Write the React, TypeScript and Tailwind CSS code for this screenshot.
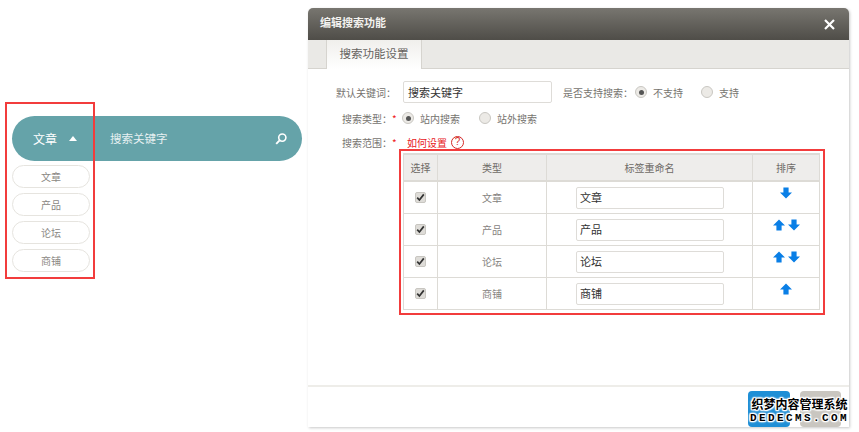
const font = '[font-family:"Noto_Sans_CJK_SC","Liberation_Sans",sans-serif]';

function Radio({ on, label, className = "" }: { on?: boolean; label: string; className?: string }) {
  return (
    <span className={`flex items-center gap-[6px] whitespace-nowrap ${className}`}>
      <span className="flex h-[12px] w-[12px] items-center justify-center rounded-full border border-[#c9c7c2] bg-[#eceae6]">
        {on && <span className="h-[5px] w-[5px] rounded-full bg-[#555]" />}
      </span>
      <span>{label}</span>
    </span>
  );
}

function Arrow({ up }: { up?: boolean }) {
  return (
    <svg width="12" height="12" viewBox="0 0 12 12" className={up ? "" : "rotate-180"}>
      <path d="M6 .5 12 6.5H8.6V11.5H3.4V6.5H0Z" fill="#0a7fe6" />
    </svg>
  );
}

function Check() {
  return (
    <span className="flex h-[11px] w-[11px] items-center justify-center rounded-[2px] border border-[#c8c6c1] bg-[#dedcd8]">
      <svg width="9" height="9" viewBox="0 0 9 9">
        <path d="M1.2 4.6 3.4 7 7.8 1.4" fill="none" stroke="#333" strokeWidth="1.7" />
      </svg>
    </span>
  );
}

const rows = [
  { name: "文章", up: false, down: true, h: "h-[32px]" },
  { name: "产品", up: true, down: true, h: "h-[32px]" },
  { name: "论坛", up: true, down: true, h: "h-[32px]" },
  { name: "商铺", up: true, down: false, h: "h-[31px]" },
];

export default function App() {
  return (
    <div className={`relative flex h-[432px] w-[859px] items-start overflow-hidden bg-white ${font}`}>
      {/* Left: search widget */}
      <div className="ml-[12px] mt-[116px] flex w-[290px] flex-col">
        <div className="flex h-[45px] items-center rounded-full bg-[#65a3a9] text-[12px] text-white">
          <span className="ml-[21px]">文章</span>
          <span className="ml-[12px] h-0 w-0 border-x-[4.5px] border-b-[5px] border-x-transparent border-b-white" />
          <span className="ml-[33px] text-[11.5px] text-[#e6f0f1]">搜索关键字</span>
          <svg width="14" height="14" viewBox="0 0 14 14" className="ml-auto mr-[14px]">
            <circle cx="8.3" cy="5.6" r="3.6" fill="none" stroke="#fff" strokeWidth="1.6" />
            <path d="M5.6 8.4 2.2 11.9" stroke="#fff" strokeWidth="1.9" />
          </svg>
        </div>
        <div className="mt-[4px] flex w-[78px] flex-col gap-[5px]">
          {rows.map((r) => (
            <div
              key={r.name}
              className="flex h-[23px] items-center justify-center rounded-full border border-[#e6e4df] text-[10px] text-[#8a8783]"
            >
              {r.name}
            </div>
          ))}
        </div>
      </div>

      {/* Right: dialog */}
      <div className="ml-[6px] mt-[8px] flex h-[419px] w-[541px] flex-col overflow-hidden rounded-t-[5px] bg-white shadow-[1px_1px_3px_rgba(0,0,0,0.22)]">
        <div className="flex h-[32px] shrink-0 items-center justify-between bg-gradient-to-b from-[#787670] to-[#4f4d48] pl-[12px] pr-[14px]">
          <span className="pb-[4px] text-[11px] font-bold text-[#f3f2ef]">编辑搜索功能</span>
          <svg width="11" height="11" viewBox="0 0 11 11">
            <path d="M1 1 10 10M10 1 1 10" stroke="#fff" strokeWidth="2.2" />
          </svg>
        </div>
        <div className="flex h-[29px] shrink-0 border-b border-[#d6d4cf] bg-[#eae9e6] pl-[18px]">
          <div className="flex h-[29px] w-[96px] items-center justify-center border-x border-[#d6d4cf] bg-gradient-to-b from-[#f0efec] to-white pb-[2px] text-[11.5px] text-[#66635f]">
            搜索功能设置
          </div>
        </div>

        <div className="flex-1 text-[10px] text-[#76736f]">
          <div className="mt-[12px] flex items-center whitespace-nowrap">
            <span className="ml-[28px] w-[67px]">默认关键词：</span>
            <div className="flex h-[22px] w-[149px] items-center rounded-[2px] border border-[#dedcd8] pl-[4px] text-[11px] text-[#333]">
              搜索关键字
            </div>
            <span className="ml-[11px] w-[64px]">是否支持搜索：</span>
            <Radio on label="不支持" className="ml-[8px]" />
            <Radio label="支持" className="ml-[18px]" />
          </div>
          <div className="mt-[7px] flex h-[16px] items-center whitespace-nowrap">
            <span className="ml-[34px] w-[50px]">搜索类型：</span>
            <span className="w-[10px] text-[#f01818]">*</span>
            <Radio on label="站内搜索" />
            <Radio label="站外搜索" className="ml-[19px]" />
          </div>
          <div className="mt-[8px] flex h-[16px] items-center whitespace-nowrap">
            <span className="ml-[34px] w-[50px]">搜索范围：</span>
            <span className="w-[15px] text-[#f01818]">*</span>
            <span className="text-[#e8201c]">如何设置</span>
            <span className="ml-[4px] flex h-[13px] w-[13px] items-center justify-center rounded-full border border-[#d42a26] font-['Liberation_Sans'] text-[10px] leading-none text-[#d42a26]">
              ?
            </span>
          </div>

          <div className="ml-[95px] mt-[3px] w-[417px] border-x border-b border-t-[2px] border-[#dddbd6]">
            <div className="flex h-[27px] border-b-[2px] border-[#dddbd6] bg-[#eeedeb] text-[10px] text-[#6e6b67]">
              <div className="flex w-[34px] items-center justify-center border-r border-[#dddbd6]">选择</div>
              <div className="flex w-[109px] items-center justify-center border-r border-[#dddbd6]">类型</div>
              <div className="flex w-[206px] items-center justify-center border-r border-[#dddbd6]">标签重命名</div>
              <div className="flex flex-1 items-center justify-center">排序</div>
            </div>
            {rows.map((r, i) => (
              <div
                key={r.name}
                className={`flex ${r.h} ${i < 3 ? "border-b border-[#dddbd6]" : ""}`}
              >
                <div className="flex w-[34px] items-start justify-center border-r border-[#dddbd6] pt-[10px]">
                  <Check />
                </div>
                <div className="flex w-[109px] items-center justify-center border-r border-[#dddbd6] text-[10px] text-[#85827e]">
                  {r.name}
                </div>
                <div className="flex w-[206px] items-center border-r border-[#dddbd6] pl-[29px]">
                  <div className="flex h-[22px] w-[148px] items-center rounded-[2px] border border-[#dedcd8] pl-[3px] text-[11px] text-[#333]">
                    {r.name}
                  </div>
                </div>
                <div className="flex flex-1 items-start justify-center gap-[3px] pt-[5px]">
                  {r.up && <Arrow up />}
                  {r.down && <Arrow />}
                </div>
              </div>
            ))}
          </div>
        </div>

        <div className="flex h-[42px] shrink-0 justify-end gap-[10px] border-t-[2px] border-[#eeede9] pr-[8px] pt-[4px]">
          <div className="h-[36px] w-[42px] rounded-[4px] bg-[#1f8fd6]" />
          <div className="h-[36px] w-[41px] rounded-[4px] bg-[#c9c6c0]" />
        </div>
      </div>

      {/* Annotation boxes */}
      <div className="absolute left-[5px] top-[102px] h-[177px] w-[90px] border-[2px] border-[#f23c3c]" />
      <div className="absolute left-[399px] top-[149px] h-[166px] w-[426px] border-[2px] border-[#f23c3c]" />

      {/* Watermark */}
      <div className="absolute left-[750px] top-[397px] flex w-[99px] flex-col items-center whitespace-nowrap font-bold leading-none text-black [text-shadow:1px_0_1px_#fff,-1px_0_1px_#fff,0_1px_1px_#fff,0_-1px_1px_#fff,1px_1px_1px_#fff,-1px_-1px_1px_#fff,1px_-1px_1px_#fff,-1px_1px_1px_#fff,0_0_3px_#fff,0_0_3px_#fff]">
        <span className="text-[12px] leading-[14px]">织梦内容管理系统</span>
        <span className="mt-[2px] font-['Liberation_Mono'] text-[11px] leading-[11px] tracking-[2.4px]">DEDECMS.COM</span>
      </div>
    </div>
  );
}
